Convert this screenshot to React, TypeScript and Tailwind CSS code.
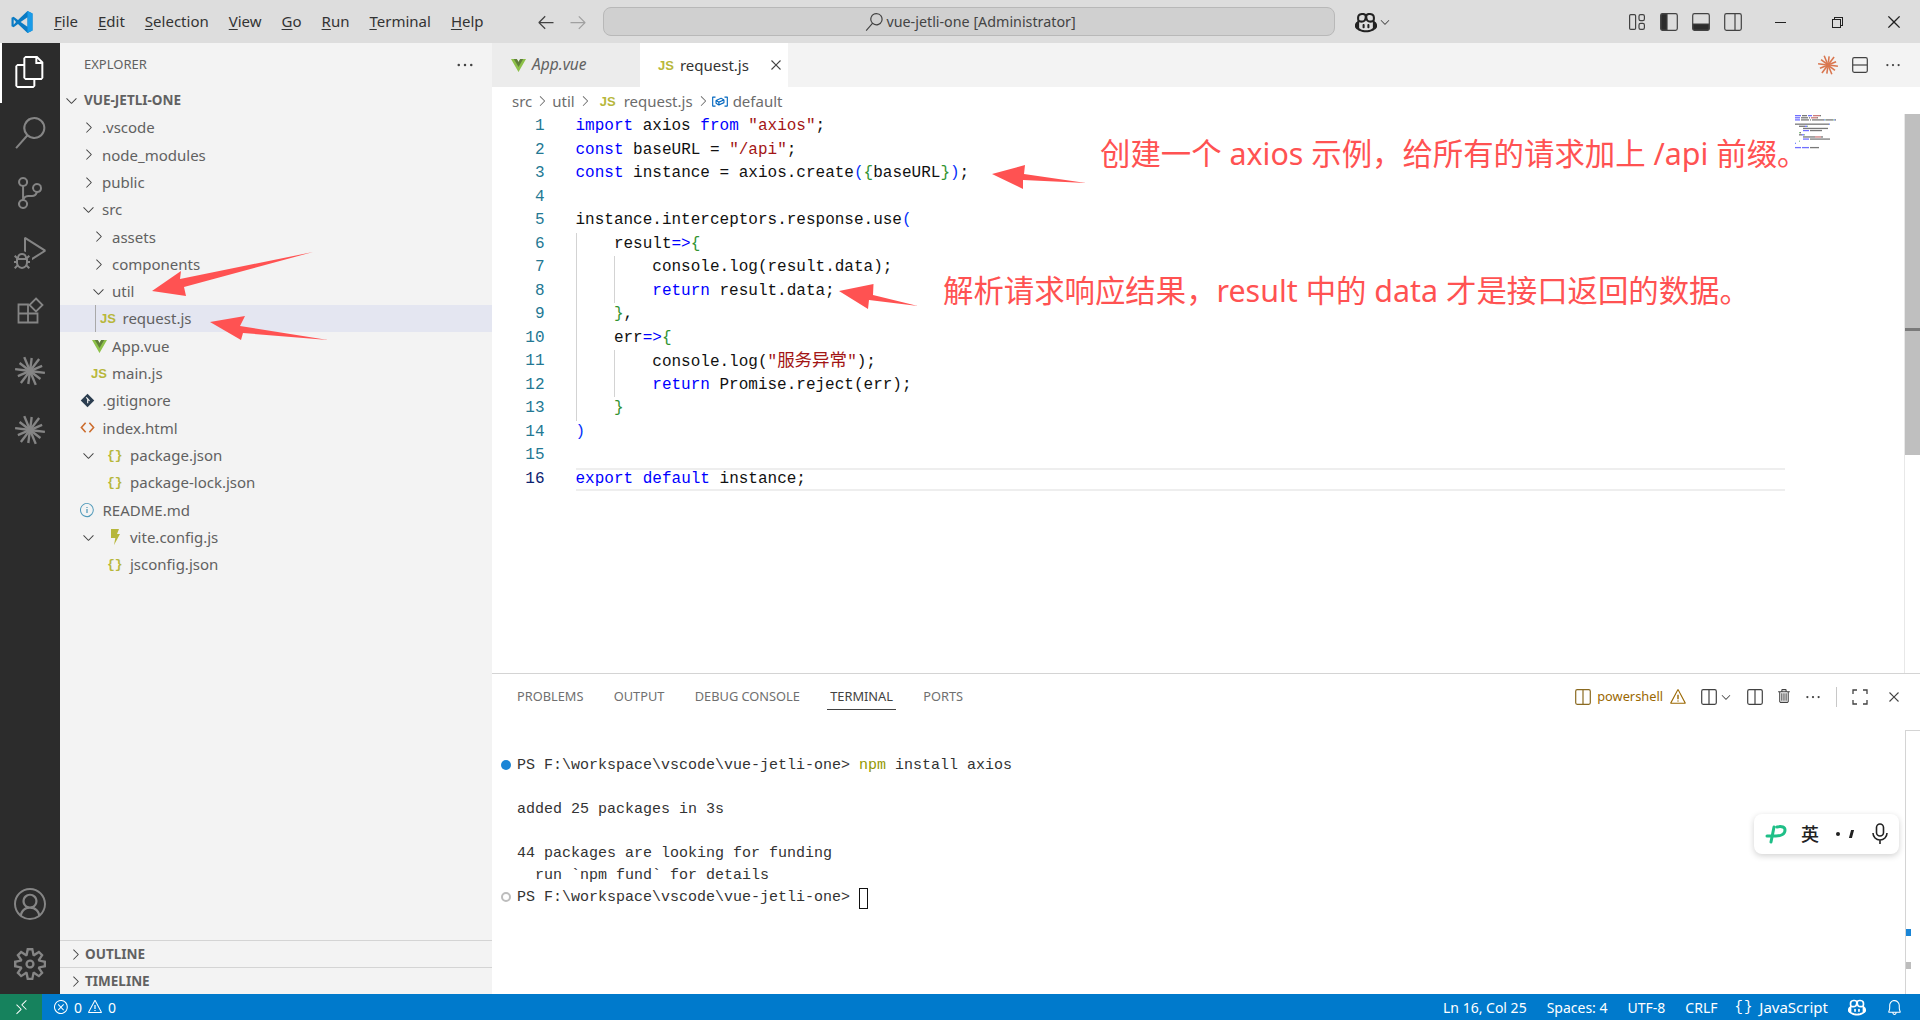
import type { ReactNode } from 'react';
import {
  VscFiles, VscSearch, VscSourceControl, VscDebugAlt, VscAccount, VscSettingsGear,
  VscRemote, VscError, VscWarning, VscBell, VscChevronRight, VscChevronDown, VscEllipsis, VscClose,
  VscCopilot, VscTrash, VscArrowLeft, VscArrowRight, VscChromeMinimize, VscChromeRestore,
  VscChromeClose, VscInfo, VscSymbolVariable,
} from 'react-icons/vsc';

const UI = "font-['Noto_Sans','Noto_Sans_CJK_SC',sans-serif]";
const MONO = "font-['Liberation_Mono','Noto_Sans_CJK_SC',monospace]";

const KW = '#0000ff';
const STR = '#a31515';
const TXT = '#111111';
const GRN = '#319331';
const BLU = '#0431fa';

type Tok = [string, string];
type Line = { guides: number; toks: Tok[] };

const code: Line[] = [
  { guides: 0, toks: [['import', KW], [' axios ', TXT], ['from', KW], [' ', TXT], ['"axios"', STR], [';', TXT]] },
  { guides: 0, toks: [['const', KW], [' baseURL = ', TXT], ['"/api"', STR], [';', TXT]] },
  { guides: 0, toks: [['const', KW], [' instance = axios.create', TXT], ['(', BLU], ['{', GRN], ['baseURL', TXT], ['}', GRN], [')', BLU], [';', TXT]] },
  { guides: 0, toks: [] },
  { guides: 0, toks: [['instance.interceptors.response.use', TXT], ['(', BLU]] },
  { guides: 1, toks: [['result', TXT], ['=>', KW], ['{', GRN]] },
  { guides: 2, toks: [['console.log', TXT], ['(', TXT], ['result.data', TXT], [')', TXT], [';', TXT]] },
  { guides: 2, toks: [['return', KW], [' result.data;', TXT]] },
  { guides: 1, toks: [['}', GRN], [',', TXT]] },
  { guides: 1, toks: [['err', TXT], ['=>', KW], ['{', GRN]] },
  { guides: 2, toks: [['console.log', TXT], ['(', TXT], ['"', STR], ['服务异常', STR], ['"', STR], [')', TXT], [';', TXT]] },
  { guides: 2, toks: [['return', KW], [' Promise.reject', TXT], ['(', TXT], ['err', TXT], [')', TXT], [';', TXT]] },
  { guides: 1, toks: [['}', GRN]] },
  { guides: 0, toks: [[')', BLU]] },
  { guides: 0, toks: [] },
  { guides: 0, toks: [['export', KW], [' ', TXT], ['default', KW], [' instance;', TXT]] },
];

function Spark({ size, color, className }: { size: number; color: string; className?: string }) {
  const rays = Array.from({ length: 12 }, (_, i) => (i * Math.PI) / 6 + 0.13);
  return (
    <svg width={size} height={size} viewBox="0 0 24 24" className={className}>
      {rays.map((a, i) => (
        <line
          key={i}
          x1={12 + Math.cos(a) * 3}
          y1={12 + Math.sin(a) * 3}
          x2={12 + Math.cos(a) * (i % 2 ? 10.5 : 12)}
          y2={12 + Math.sin(a) * (i % 2 ? 10.5 : 12)}
          stroke={color}
          strokeWidth="1.9"
        />
      ))}
      <circle cx="12" cy="12" r="3.4" fill={color} />
    </svg>
  );
}

function VueIcon() {
  return (
    <svg width="15" height="15" viewBox="0 0 16 16">
      <path d="M0 1h6.2L8 4.2 9.8 1H16L8 15z" fill="#8dc149" />
      <path d="M3 1h3.2L8 4.2 9.8 1H13L8 9.6z" fill="#5f7f3a" />
    </svg>
  );
}

function JsIcon({ className = '' }: { className?: string }) {
  return <span className={`font-['Liberation_Sans',sans-serif] font-bold text-[#b7b73b] text-[13px] leading-none ${className}`}>JS</span>;
}

function JsonIcon() {
  return <span className={`${MONO} font-bold text-[#b7b73b] text-[13px] leading-none`}>{'{}'}</span>;
}

function GitIcon() {
  return (
    <svg width="15" height="15" viewBox="0 0 16 16">
      <path d="M8 .8 15.2 8 8 15.2.8 8z" fill="#2b3d4f" />
      <path d="M6.6 4.6 8.2 6.2v4.6M8.2 6.4l2 2" stroke="#f3f3f3" strokeWidth="1.2" fill="none" />
    </svg>
  );
}

function HtmlIcon() {
  return (
    <svg width="15" height="15" viewBox="0 0 16 16" fill="none" stroke="#cc6d2e" strokeWidth="1.7">
      <path d="M6 3 1.5 8 6 13M10 3l4.500 5L10 13" />
    </svg>
  );
}

function BoltIcon() {
  return (
    <svg width="10" height="16" viewBox="0 0 10 16">
      <path d="M1 0h8L7 5h3L4 16l1.300-7H1z" fill="#b7b73b" />
    </svg>
  );
}

function ExtensionsIcon({ color }: { color: string }) {
  return (
    <svg width="27" height="27" viewBox="0 0 27 27" fill="none" stroke={color} strokeWidth="1.800">
      <path d="M1.500 7.500H11V25.500H1.500zM1.500 16.500H20.500V25.500H11" />
      <path d="M19 1.500 25.500 8 19 14.500 12.500 8z" />
    </svg>
  );
}

function LayoutIcon({ kind }: { kind: 'grid' | 'left' | 'bottom' | 'right' }) {
  if (kind === 'grid') {
    return (
      <svg width="18" height="18" viewBox="0 0 18 18" fill="none" stroke="#424242" strokeWidth="1.2">
        <rect x="1.600" y="1.600" width="6" height="14.800" rx="1.200" />
        <rect x="11" y="1.600" width="5.400" height="6" rx="1.600" />
        <rect x="11" y="10.400" width="5.400" height="6" rx="1.600" />
      </svg>
    );
  }
  return (
    <svg width="18" height="18" viewBox="0 0 18 18" fill="none" stroke="#424242" strokeWidth="1.2">
      <rect x="0.700" y="0.700" width="16.600" height="16.600" rx="1.800" />
      {kind === 'left' && <path d="M1 2.500a1.500 1.500 0 0 1 1.500-1.500H7v16H2.500A1.500 1.500 0 0 1 1 15.500z" fill="#2c2c2c" />}
      {kind === 'bottom' && <path d="M1 11h16v4.500a1.500 1.500 0 0 1-1.500 1.500h-13A1.500 1.500 0 0 1 1 15.500z" fill="#2c2c2c" />}
      {kind === 'right' && <path d="M11 1v16" />}
    </svg>
  );
}

function SplitIcon({ color = '#424242', across = false }: { color?: string; across?: boolean }) {
  return (
    <svg width="16" height="16" viewBox="0 0 16 16" fill="none" stroke={color} strokeWidth="1.200">
      <rect x="0.700" y="0.700" width="14.600" height="14.600" rx="1.500" />
      <path d={across ? 'M1 8h14' : 'M8 1v14'} />
    </svg>
  );
}

function CornersIcon() {
  return (
    <svg width="16" height="16" viewBox="0 0 16 16" fill="none" stroke="#424242" strokeWidth="1.300">
      <path d="M1 5V1h4M11 1h4v4M15 11v4h-4M5 15H1v-4" />
    </svg>
  );
}

type Row = { pad: string; chev?: 'r' | 'd'; chevW?: string; icon?: ReactNode; iconW?: string; label: string; on?: boolean };

const rows: Row[] = [
  { pad: 'pl-[20px]', chev: 'r', chevW: 'w-[22px]', label: '.vscode' },
  { pad: 'pl-[20px]', chev: 'r', chevW: 'w-[22px]', label: 'node_modules' },
  { pad: 'pl-[20px]', chev: 'r', chevW: 'w-[22px]', label: 'public' },
  { pad: 'pl-[20px]', chev: 'd', chevW: 'w-[22px]', label: 'src' },
  { pad: 'pl-[30px]', chev: 'r', chevW: 'w-[22px]', label: 'assets' },
  { pad: 'pl-[30px]', chev: 'r', chevW: 'w-[22px]', label: 'components' },
  { pad: 'pl-[30px]', chev: 'd', chevW: 'w-[22px]', label: 'util' },
  { pad: 'pl-[40px]', icon: <JsIcon />, iconW: 'w-[22.500px]', label: 'request.js', on: true },
  { pad: 'pl-[32px]', icon: <VueIcon />, iconW: 'w-[20px]', label: 'App.vue' },
  { pad: 'pl-[31px]', icon: <JsIcon />, iconW: 'w-[21px]', label: 'main.js' },
  { pad: 'pl-[20px]', icon: <GitIcon />, iconW: 'w-[22.500px]', label: '.gitignore' },
  { pad: 'pl-[20px]', icon: <HtmlIcon />, iconW: 'w-[22.500px]', label: 'index.html' },
  { pad: 'pl-[20px]', chev: 'd', chevW: 'w-[27px]', icon: <JsonIcon />, iconW: 'w-[23px]', label: 'package.json' },
  { pad: 'pl-[47px]', icon: <JsonIcon />, iconW: 'w-[23px]', label: 'package-lock.json' },
  { pad: 'pl-[19px]', icon: <VscInfo size={16} color="#519aba" />, iconW: 'w-[23.500px]', label: 'README.md' },
  { pad: 'pl-[20px]', chev: 'd', chevW: 'w-[30px]', icon: <BoltIcon />, iconW: 'w-[20px]', label: 'vite.config.js' },
  { pad: 'pl-[47px]', icon: <JsonIcon />, iconW: 'w-[23px]', label: 'jsconfig.json' },
];

function TreeRow({ r }: { r: Row }) {
  return (
    <div className={`relative flex items-center h-[27.300px] ${r.pad} ${r.on ? 'bg-[#e4e6f1]' : ''}`}>
      {r.on && <div className="absolute left-[35px] top-0 bottom-0 w-px bg-[#a9a9a9]" />}
      {r.chev && (
        <div className={`${r.chevW} shrink-0`}>
          {r.chev === 'r' ? <VscChevronRight size={17} color="#424242" /> : <VscChevronDown size={17} color="#424242" />}
        </div>
      )}
      {r.icon && <div className={`${r.iconW} shrink-0 flex items-center`}>{r.icon}</div>}
      <span className="text-[15px] text-[#616161] whitespace-nowrap">{r.label}</span>
    </div>
  );
}

function Sidebar() {
  return (
    <aside className="w-[432px] shrink-0 bg-[#f3f3f3] flex flex-col">
      <div className="h-[44px] flex items-center justify-between pl-[24px] pr-[17px]">
        <span className="text-[13px] text-[#616161]">EXPLORER</span>
        <VscEllipsis size={20} color="#424242" />
      </div>
      <div className="h-[27px] flex items-center pl-[3px]">
        <VscChevronDown size={17} color="#424242" className="mr-[4px]" />
        <span className="text-[13.500px] font-bold text-[#616161]">VUE-JETLI-ONE</span>
      </div>
      <div className="flex-1">
        {rows.map((r) => <TreeRow key={r.label} r={r} />)}
      </div>
      {['OUTLINE', 'TIMELINE'].map((s) => (
        <div key={s} className="h-[27px] border-t border-[#d4d4d4] flex items-center pl-[7px]">
          <VscChevronRight size={17} color="#424242" className="mr-[1px]" />
          <span className="text-[13.500px] font-bold text-[#616161]">{s}</span>
        </div>
      ))}
    </aside>
  );
}

function ActivityBar() {
  const c = '#858585';
  return (
    <nav className="w-[60px] shrink-0 bg-[#2c2c2c] flex flex-col items-center">
      <div className="w-full h-[60px] flex items-center justify-center border-l-2 border-white pr-[2px] pb-[2px]">
        <VscFiles size={32} color="#ffffff" />
      </div>
      <div className="h-[60px] flex items-center"><VscSearch size={32} color={c} /></div>
      <div className="h-[60px] flex items-center"><VscSourceControl size={32} color={c} /></div>
      <div className="h-[60px] flex items-center"><VscDebugAlt size={32} color={c} /></div>
      <div className="h-[54px] flex items-center"><ExtensionsIcon color={c} /></div>
      <div className="h-[68px] flex items-center"><Spark size={30} color={c} /></div>
      <div className="h-[50px] flex items-center"><Spark size={30} color={c} /></div>
      <div className="flex-1" />
      <div className="h-[60px] flex items-center"><VscAccount size={32} color={c} /></div>
      <div className="h-[60px] flex items-center pb-[1px]"><VscSettingsGear size={32} color={c} /></div>
    </nav>
  );
}

function TitleBar() {
  const menu = ['File', 'Edit', 'Selection', 'View', 'Go', 'Run', 'Terminal', 'Help'];
  return (
    <header className="h-[43px] shrink-0 bg-[#dddddd] flex items-center text-[#333333]">
      <svg width="24" height="24" viewBox="0 0 24 24" className="ml-[10px] mr-[20px] shrink-0">
        <path d="M17.500 1 8 10 3.600 6.700 1.500 7.800V16.200L3.600 17.300 8 14l9.500 9 5-2.400V3.400z" fill="#0a7bc4" />
        <path d="M17.500 7.200 10.600 12l6.900 4.800z" fill="#dddddd" />
        <path d="M3.700 9.300 6 12l-2.300 2.700z" fill="#dddddd" />
        <path d="M17.500 1 22.500 3.400V20.600L17.500 23z" fill="#1a9be8" />
      </svg>
      <div className="flex gap-[20px] text-[15px]">
        {menu.map((m) => (
          <span key={m}><span className="underline underline-offset-2">{m[0]}</span>{m.slice(1)}</span>
        ))}
      </div>
      <VscArrowLeft size={20} color="#424242" className="ml-[52px]" />
      <VscArrowRight size={20} color="#a0a0a0" className="ml-[12px]" />
      <div className="ml-[15px] w-[732px] h-[29px] rounded-[8px] bg-[#d0d0d0] border border-[#b8b8b8] flex items-center justify-center gap-[3px] pl-[4px]">
        <VscSearch size={18} color="#424242" />
        <span className="text-[14.300px] text-[#444444]">vue-jetli-one [Administrator]</span>
      </div>
      <VscCopilot size={22} color="#222222" className="ml-[20px]" />
      <VscChevronDown size={14} color="#424242" className="ml-[1px]" />
      <div className="ml-[236px] flex gap-[14px]">
        <LayoutIcon kind="grid" />
        <LayoutIcon kind="left" />
        <LayoutIcon kind="bottom" />
        <LayoutIcon kind="right" />
      </div>
      <VscChromeMinimize size={16} color="#222222" className="ml-[30px]" />
      <VscChromeRestore size={16} color="#222222" className="ml-[41px]" />
      <VscChromeClose size={18} color="#222222" className="ml-[40px]" />
    </header>
  );
}

function Tabs() {
  return (
    <div className="h-[44px] shrink-0 bg-[#f3f3f3] flex items-center">
      <div className="h-full w-[148px] bg-[#ececec] flex items-center pl-[19px] gap-[6px]">
        <VueIcon />
        <span className="italic text-[15.500px] text-[#616161]">App.vue</span>
      </div>
      <div className="h-full w-[148px] bg-white flex items-center pl-[18px]">
        <JsIcon className="mr-[6px]" />
        <span className="text-[15px] text-[#333333]">request.js</span>
        <VscClose size={18} color="#424242" className="ml-[18px]" />
      </div>
      <div className="flex-1" />
      <Spark size={20} color="#d9764f" className="mr-[14px]" />
      <SplitIcon across />
      <VscEllipsis size={18} color="#424242" className="ml-[16px] mr-[18px]" />
    </div>
  );
}

function Breadcrumb() {
  const sep = <VscChevronRight size={16} color="#6c6c6c" className="mx-[2px]" />;
  return (
    <div className="h-[27px] shrink-0 flex items-center pl-[20px] pt-[1px] text-[15px] text-[#6c6c6c] bg-white">
      <span>src</span>{sep}<span>util</span>{sep}
      <JsIcon className="mx-[5px]" />
      <span className="ml-[3px]">request.js</span>{sep}
      <VscSymbolVariable size={18} color="#0066bf" className="-ml-[2px] mr-[4px]" />
      <span>default</span>
    </div>
  );
}

function Minimap() {
  return (
    <svg width="60" height="40" viewBox="0 0 60 40" className="ml-[8px]">
      {code.map((l, i) => {
        let x = 2 + l.guides * 4;
        return l.toks.flatMap(([t, c], j) =>
          Array.from(t).map((ch, k) => {
            const cx = x;
            x += 1;
            if (ch === ' ') return null;
            return <rect key={`${i}-${j}-${k}`} x={cx} y={i * 2.130} width="0.800" height="1.300" fill={c} opacity="0.7" />;
          }),
        );
      })}
    </svg>
  );
}

function CodeArea() {
  return (
    <div className={`h-[559px] shrink-0 flex pt-[1px] ${MONO} text-[16px]`}>
      <div className="w-[83.500px] shrink-0">
        {code.map((_, i) => (
          <div key={i} className={`h-[23.500px] leading-[23.500px] text-right pr-[31px] ${i === 15 ? 'text-[#0b216f]' : 'text-[#237893]'}`}>{i + 1}</div>
        ))}
      </div>
      <div className="flex-1 min-w-0">
        {code.map((l, i) => (
          <div key={i} className={`flex h-[23.500px] whitespace-pre ${i === 15 ? 'border-y-2 border-[#eeeeee] leading-[19.500px]' : 'leading-[23.500px]'}`}>
            {l.guides >= 1 && <span className="w-[38.400px] h-full shrink-0 border-l border-[#d3d3d3]" />}
            {l.guides >= 2 && <span className="w-[38.400px] h-full shrink-0 border-l border-[#d3d3d3]" />}
            <span>
              {l.toks.map(([t, c], j) => (
                <span key={j} style={{ color: c }} className={/[\u4e00-\u9fff]/.test(t) ? 'text-[17.500px]' : ''}>{t}</span>
              ))}
            </span>
          </div>
        ))}
      </div>
      <div className="w-[119px] shrink-0"><Minimap /></div>
      <div className="w-[16px] shrink-0 border-l border-[#e8e8e8] -mt-[1px]">
        <div className="h-[341px] bg-[#bfbfbf] flex flex-col">
          <div className="h-[214px]" />
          <div className="h-[3px] bg-[#7a7a7a]" />
        </div>
      </div>
    </div>
  );
}

function Panel() {
  const tabs = ['PROBLEMS', 'OUTPUT', 'DEBUG CONSOLE', 'TERMINAL', 'PORTS'];
  return (
    <section className="flex-1 min-h-0 border-t border-[#d4d4d4] flex flex-col">
      <div className="h-[45px] shrink-0 flex items-center pl-[25px]">
        <div className="flex gap-[30.300px] text-[12.800px] text-[#6f6f6f]">
          {tabs.map((t) => (
            <span key={t} className={t === 'TERMINAL' ? 'relative text-[#424242]' : ''}>
              {t}
              {t === 'TERMINAL' && <span className="absolute -left-[3px] -right-[3px] -bottom-[4px] h-px bg-[#424242]" />}
            </span>
          ))}
        </div>
        <div className="flex-1" />
        <div className="flex items-center text-[#9a6700] mr-[14px]">
          <SplitIcon color="#8a6a20" />
          <span className="ml-[6px] text-[12.800px]">powershell</span>
          <VscWarning size={18} className="ml-[6px]" />
        </div>
        <SplitIcon />
        <VscChevronDown size={14} color="#424242" className="ml-[2px] mr-[14px]" />
        <SplitIcon />
        <VscTrash size={17} color="#424242" className="ml-[13px] mr-[11px]" />
        <VscEllipsis size={18} color="#424242" className="mr-[14px]" />
        <div className="w-px h-[20px] bg-[#c8c8c8] mr-[15px]" />
        <CornersIcon />
        <VscClose size={18} color="#424242" className="ml-[17px] mr-[17px]" />
      </div>
      <div className="flex-1 flex min-h-0">
        <div className={`flex-1 pt-[36px] ${MONO} text-[15px] text-[#333333] leading-[22px]`}>
          <div className="flex h-[22px] items-center">
            <div className="w-[25px] flex justify-center pl-[2px] pb-[3px]"><span className="w-[10px] h-[10px] rounded-full bg-[#1a85d6]" /></div>
            <span>PS F:\workspace\vscode\vue-jetli-one&gt; <span className="text-[#949800]">npm</span> install axios</span>
          </div>
          <div className="h-[22px]" />
          <div className="h-[22px] pl-[25px]">added 25 packages in 3s</div>
          <div className="h-[22px]" />
          <div className="h-[22px] pl-[25px]">44 packages are looking for funding</div>
          <div className="h-[22px] pl-[25px] whitespace-pre">  run `npm fund` for details</div>
          <div className="flex h-[22px] items-center whitespace-pre">
            <div className="w-[25px] flex justify-center pl-[2px] pb-[3px]"><span className="w-[10px] h-[10px] rounded-full border-[2px] border-[#bdbdbd]" /></div>
            <span>PS F:\workspace\vscode\vue-jetli-one&gt; </span>
            <span className="w-[9px] h-[21px] border border-[#111111]" />
          </div>
        </div>
        <div className="w-[15px] shrink-0 mt-[11px] border-l border-t border-[#d4d4d4] flex flex-col">
          <div className="h-[198px]" />
          <div className="h-[7px] w-[5px] bg-[#1a85d6]" />
          <div className="h-[26px]" />
          <div className="h-[7px] w-[5px] bg-[#bdbdbd]" />
        </div>
      </div>
    </section>
  );
}

function StatusBar() {
  return (
    <footer className="h-[26px] shrink-0 bg-[#007acc] flex items-center text-white text-[14px]">
      <div className="w-[42px] h-full bg-[#16825d] flex items-center justify-center"><VscRemote size={17} /></div>
      <VscError size={16} className="ml-[11px]" />
      <span className="ml-[5px]">0</span>
      <VscWarning size={16} className="ml-[5px]" />
      <span className="ml-[5px]">0</span>
      <div className="flex-1" />
      <div className="flex items-center gap-[20px]">
        <span>Ln 16, Col 25</span>
        <span>Spaces: 4</span>
        <span>UTF-8</span>
        <span className="-mr-[3px]">CRLF</span>
        <span className="flex items-center gap-[6px]"><span className={`${MONO} tracking-[1px]`}>{'{}'}</span><span className="text-[15px]">JavaScript</span></span>
        <VscCopilot size={18} />
        <VscBell size={17} className="mr-[17px]" />
      </div>
    </footer>
  );
}

function Overlays() {
  const red = '#ff5252';
  return (
    <>
      <svg width="1920" height="1020" className="absolute inset-0 pointer-events-none">
        <polygon fill={red} points="313,252 180,279 181,271 152,291 186,296 184,287" />
        <polygon fill={red} points="328,340 240,326 245,316 210,322 241,340 243,333" />
        <polygon fill={red} points="1086,183 1024,174 1025,165 992,174 1023,189 1023,180" />
        <polygon fill={red} points="918,306 873,295 873.500,284 839,291 868,309 869,300" />
      </svg>
      <span className="absolute left-[1100px] top-[132px] text-[30.400px] leading-[44px] text-[#ff5252] whitespace-nowrap">创建一个 axios 示例，给所有的请求加上 /api 前缀。</span>
      <span className="absolute left-[943px] top-[269px] text-[30.400px] leading-[44px] text-[#ff5252] whitespace-nowrap">解析请求响应结果，result 中的 data 才是接口返回的数据。</span>
      <div className="absolute left-[1754px] top-[814px] w-[145px] h-[40px] rounded-[8px] bg-white shadow-[0_2px_6px_rgba(0,0,0,0.18)] flex items-center text-[#222222]">
        <svg width="22" height="20" viewBox="0 0 22 20" className="ml-[11px]" fill="none" stroke="#1fbf87" strokeWidth="3" strokeLinecap="round">
          <path d="M2 12h9c5 0 9-2 9-6 0-3-3-4-8-3M9 3 6 18" />
        </svg>
        <span className="ml-[14px] text-[18px] leading-none font-medium">英</span>
        <span className="ml-[17px] w-[4px] h-[4px] rounded-full bg-[#222222]" />
        <span className="ml-[10px] w-[3px] h-[8px] bg-[#222222] skew-x-[-15deg]" />
        <svg width="16" height="22" viewBox="0 0 16 22" className="ml-[19px]" fill="none" stroke="#222222" strokeWidth="1.600">
          <rect x="4.500" y="1" width="7" height="12" rx="3.500" />
          <path d="M1 10a7 7 0 0 0 14 0M8 17v4" />
        </svg>
      </div>
    </>
  );
}

export default function App() {
  return (
    <div className={`relative w-[1920px] h-[1020px] overflow-hidden flex flex-col bg-white ${UI}`}>
      <TitleBar />
      <div className="flex-1 min-h-0 flex">
        <ActivityBar />
        <Sidebar />
        <main className="flex-1 min-w-0 flex flex-col">
          <Tabs />
          <Breadcrumb />
          <CodeArea />
          <Panel />
        </main>
      </div>
      <StatusBar />
      <Overlays />
    </div>
  );
}
